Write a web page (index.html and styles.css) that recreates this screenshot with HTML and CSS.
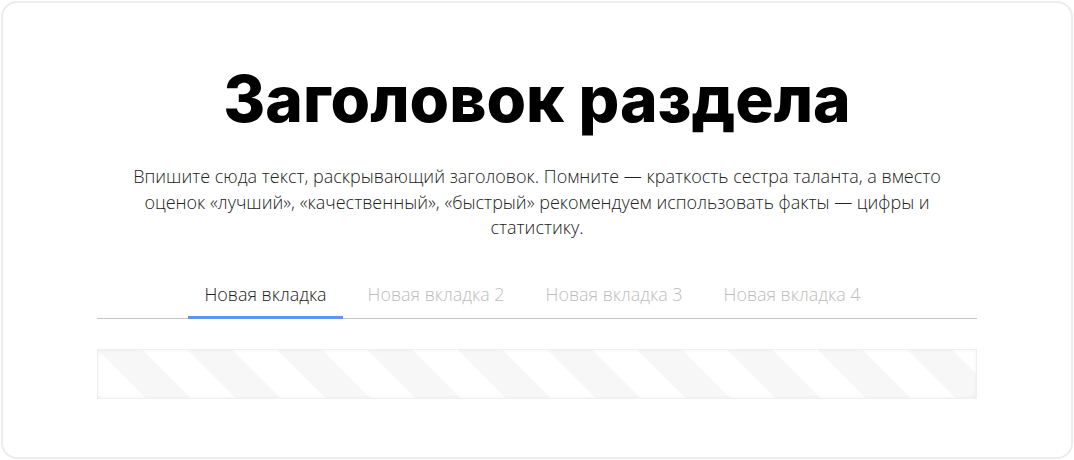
FILE: index.html
```html
<!DOCTYPE html>
<html lang="ru">
<head>
<meta charset="utf-8">
<title>Заголовок раздела</title>
<link rel="stylesheet" href="styles.css">
</head>
<body>
<section class="card">
  <h1 class="title">Заголовок раздела</h1>
  <p class="lead">Впишите сюда текст, раскрывающий заголовок. Помните — краткость сестра таланта, а вместо оценок «лучший», «качественный», «быстрый» рекомендуем использовать факты — цифры и статистику.</p>
  <nav class="tabs">
    <a class="tab tab-active">Новая вкладка</a>
    <a class="tab">Новая вкладка 2</a>
    <a class="tab">Новая вкладка 3</a>
    <a class="tab">Новая вкладка 4</a>
  </nav>
  <div class="placeholder"></div>
</section>
</body>
</html>
```

FILE: styles.css
```css
html, body {
  margin: 0;
  padding: 0;
  background: #fff;
}
body {
  padding: 1px;
  font-family: "Open Sans", "Noto Sans", sans-serif;
}
.card {
  box-sizing: border-box;
  width: 1072px;
  height: 458px;
  border: 2px solid #ececec;
  border-radius: 16px;
  padding: 57px 94px 0;
  display: flex;
  flex-direction: column;
  align-items: center;
}
.title {
  margin: 0;
  font-family: "Inter", "DejaVu Sans", sans-serif;
  font-weight: 800;
  font-size: 64px;
  line-height: 77px;
  color: #000;
  text-align: center;
}
.lead {
  margin: 27px 0 0;
  max-width: 830px;
  font-weight: 300;
  font-size: 18px;
  line-height: 25.5px;
  color: #222;
  text-align: center;
}
.tabs {
  align-self: stretch;
  margin-top: 31px;
  display: flex;
  justify-content: center;
  border-bottom: 1px solid #c6c6c6;
}
.tab {
  margin: 0 9px -1px 0;
  padding: 10px 16px;
  border-bottom: 3px solid transparent;
  font-weight: 300;
  font-size: 17.9px;
  line-height: 24px;
  color: #bdbdbd;
  cursor: pointer;
}
.tab-active {
  color: #222;
  border-bottom-color: #5b95f5;
}
.placeholder {
  align-self: stretch;
  box-sizing: border-box;
  height: 50px;
  margin-top: 30px;
  border: 1px solid #efefef;
  background-color: #fff;
  background-image: linear-gradient(45deg,
    #f7f7f7 25%, #ffffff 25%, #ffffff 50%,
    #f7f7f7 50%, #f7f7f7 75%, #ffffff 75%);
  background-size: 90px 90px;
  box-shadow: inset 0 0 4px rgba(0, 0, 0, 0.05);
}
```
